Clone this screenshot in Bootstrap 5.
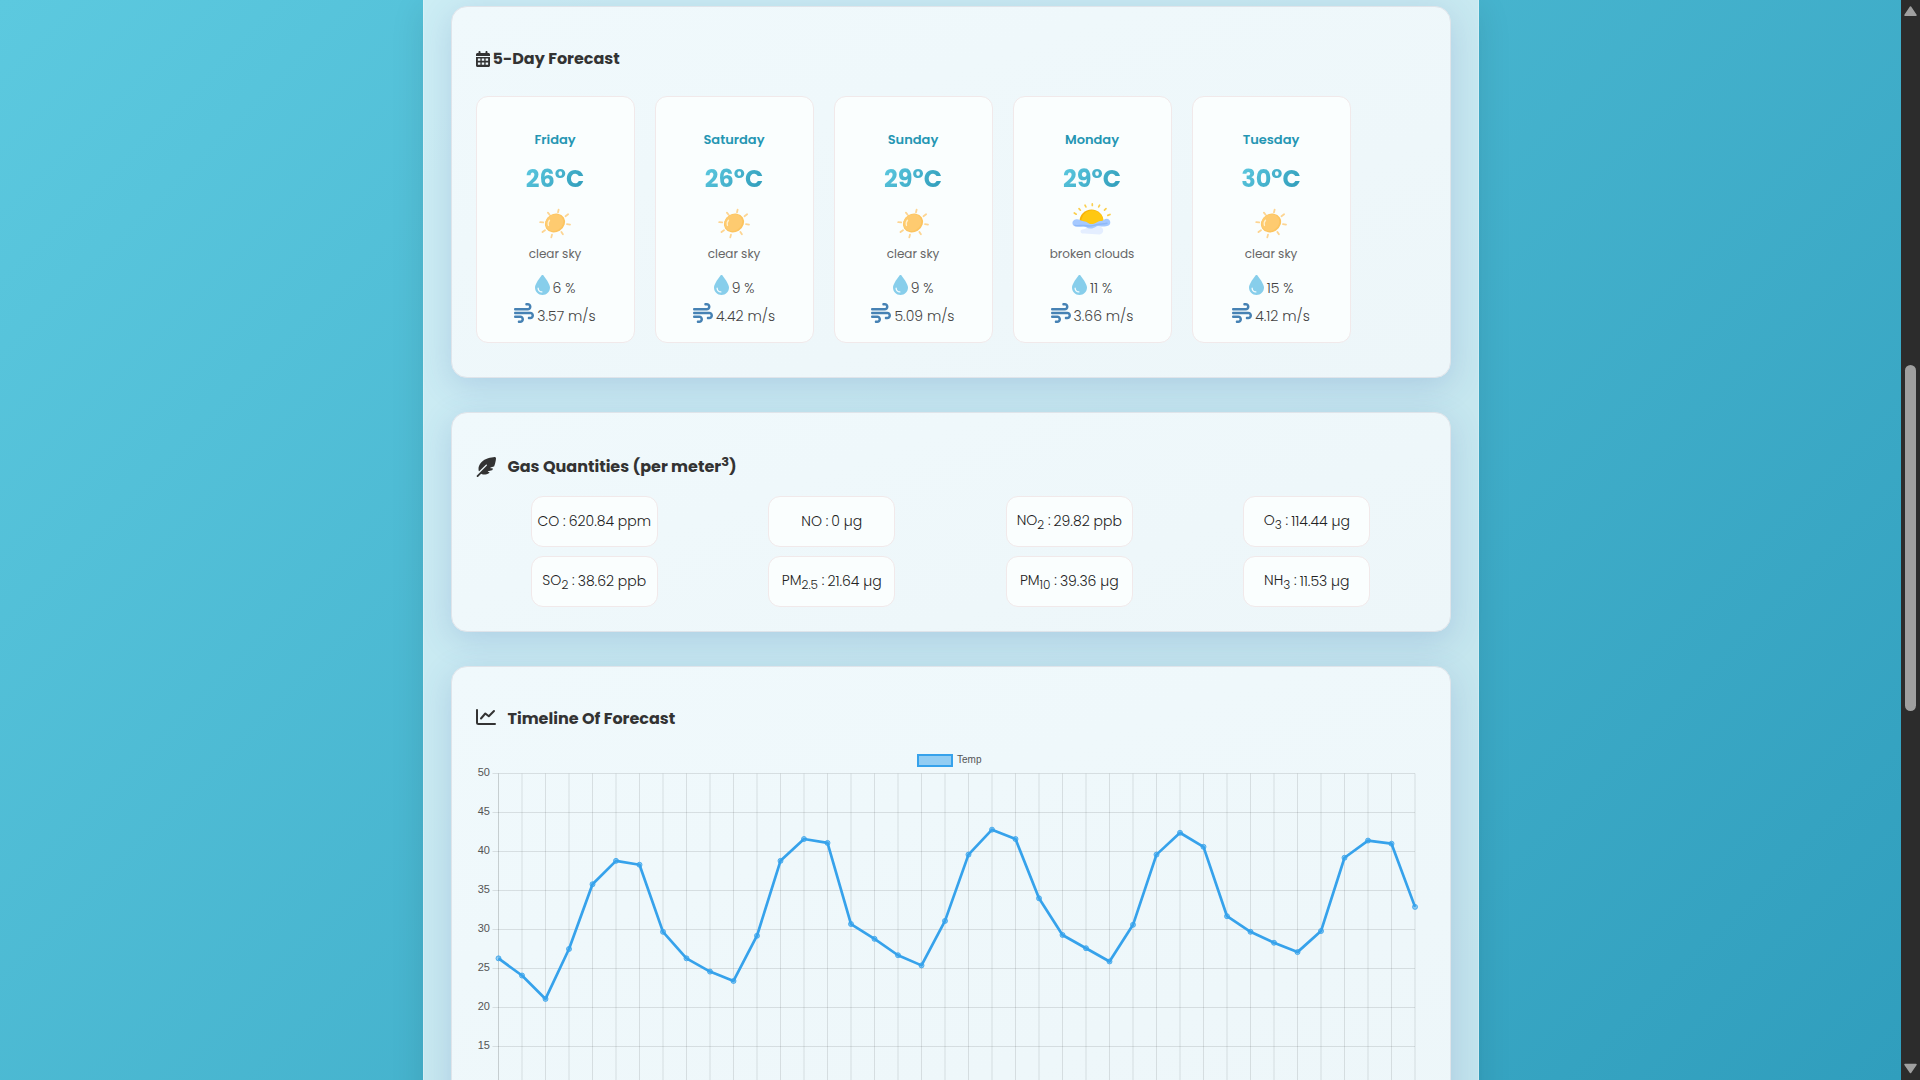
<!DOCTYPE html>
<html lang="en">
<head>
<meta charset="utf-8">
<meta name="viewport" content="width=device-width, initial-scale=1">
<title>Weather Forecast</title>
<link href="https://cdn.jsdelivr.net/npm/bootstrap@5.3.0/dist/css/bootstrap.min.css" rel="stylesheet">
<style>
  body { font-family: Poppins, Inter, "Open Sans", sans-serif; font-size: 14px; color: #333; }
  .sky { background: linear-gradient(135deg, #5cc9df 0%, #309ebd 100%); }
  .shell { max-width: 1056px; padding: 6px 27px; background: rgba(255,255,255,.7); border: 1px solid rgba(255,255,255,.25); border-top: 0; box-shadow: 0 8px 32px rgba(0,0,0,.1); }
  .stack { gap: 34px; }
  .panel { padding: 40px 24px 24px; border: 1px solid #dfe4ea; border-radius: 16px; background: #eff8fb linear-gradient(160deg, #f0f9fc, #edf6f9); box-shadow: 0 8px 32px rgba(60,90,170,.19); }
  .panel-days { padding-bottom: 34px; }
  .heading { font-size: 16px; font-weight: 700; line-height: 24px; }
  .heading-days { gap: 3px; margin-bottom: 25px; }
  .heading-gas { gap: 12px; line-height: 28px; margin-bottom: 15px; }
  .heading-gas sup { font-size: 13px; }
  .heading-chart { gap: 12px; margin-bottom: 19px; }
  .tile { background: #fafefe; border: 1px solid #f1e9ea; border-radius: 12px; }
  .days { gap: 20px; }
  .day { width: 159px; padding: 31px 8px 12px; }
  .day-name { font-size: 13px; line-height: 24px; font-weight: 600; color: #2596b3; }
  .day-temp { font-size: 24px; line-height: 36px; font-weight: 700; margin-top: 9px; background: linear-gradient(135deg, #5fcbe2, #2b98b6); -webkit-background-clip: text; background-clip: text; color: transparent; }
  .day-icon { margin-top: 6px; }
  .day-text { font-size: 12px; line-height: 20px; margin: 1px 0 10px; color: #666; }
  .reading { line-height: 28px; gap: 3px; color: #444; font-weight: 300; }
  .reading svg { margin-bottom: 7px; }
  .drop { color: #87ceeb; }
  .wind { color: #4682b4; }
  .gas-rows { row-gap: 9px; }
  .gas { width: 127px; height: 51px; gap: 3px; color: #222; font-weight: 300; }
  .gas sub { position: static; font-size: 12px; line-height: inherit; vertical-align: sub; }
  .axis-text { font-family: "Liberation Sans", Arial, sans-serif; font-size: 11px; fill: #555; }
  .legend-text { font-size: 10px; }
  .rail { width: 19px; background: #2c2c2c; padding: 6px 0; }
  .thumb { width: 11px; height: 346px; margin-top: 348px; border-radius: 6px; background: #9f9f9f; }
</style>
<script src="https://cdn.jsdelivr.net/npm/bootstrap@5.3.0/dist/js/bootstrap.bundle.min.js"></script>
</head>
<body>
<svg class="d-none" xmlns="http://www.w3.org/2000/svg">
  <defs>
    <symbol id="i-drop" viewBox="0 0 384 512"><path fill="currentColor" d="M192 512C86 512 0 426 0 320C0 228.8 130.2 57.7 166.6 11.7C172.6 4.2 181.5 0 191.1 0l1.8 0c9.6 0 18.5 4.2 24.5 11.7C253.8 57.7 384 228.8 384 320c0 106-86 192-192 192zM96 336c0-8.800-7.200-16-16-16s-16 7.200-16 16c0 61.900 50.100 112 112 112c8.800 0 16-7.200 16-16s-7.200-16-16-16c-44.200 0-80-35.800-80-80z"/></symbol>
    <symbol id="i-wind" viewBox="0 0 512 512"><path fill="currentColor" d="M288 32c0 17.700 14.300 32 32 32l32 0c17.700 0 32 14.300 32 32s-14.300 32-32 32L32 128c-17.700 0-32 14.300-32 32s14.300 32 32 32l320 0c53 0 96-43 96-96s-43-96-96-96L320 0c-17.700 0-32 14.300-32 32zm64 352c0 17.700 14.300 32 32 32l32 0c53 0 96-43 96-96s-43-96-96-96L32 224c-17.700 0-32 14.300-32 32s14.300 32 32 32l384 0c17.700 0 32 14.300 32 32s-14.300 32-32 32l-32 0c-17.700 0-32 14.300-32 32zM128 512l32 0c53 0 96-43 96-96s-43-96-96-96L32 320c-17.700 0-32 14.300-32 32s14.300 32 32 32l128 0c17.700 0 32 14.300 32 32s-14.300 32-32 32l-32 0c-17.700 0-32 14.300-32 32s14.300 32 32 32z"/></symbol>
    <symbol id="i-sun" viewBox="0 0 40 40">
      <g stroke="#fdd592" stroke-width="1.800" stroke-linecap="round">
        <path d="M23 9.300l.6-2.600M30.500 13.200l2.600-1.900M32 21.200l3 .4M26.400 29l1.500 2.200M17 31.600l-.7 2.800M10 27.300l-2.500 1.800M8.200 19.400l-3-.2M14.600 11.700l-1.700-2.100"/>
      </g>
      <ellipse cx="20" cy="20" rx="10.500" ry="9" transform="rotate(-32 20 20)" fill="#fcc45f"/>
      <ellipse cx="19.300" cy="19.600" rx="9.300" ry="8" transform="rotate(-32 19.300 19.600)" fill="#fecb70"/>
      <path d="M13.500 22.500q-1-3 1-5.300" fill="none" stroke="#fff0cc" stroke-width="1.300" stroke-linecap="round"/>
    </symbol>
    <symbol id="i-cloud" viewBox="1 2 40 40">
      <g stroke="#fbcf4f" stroke-width="1.700" stroke-linecap="round">
        <path d="M21.300 2.900v1.500M14 4.200l.9 1.700M28.600 4.200l-.9 1.700M8 7.600l1.400 1.600M35 7.600l-1.500 1.500M3.300 12l1.900 1.200M39 13.500l-2.200.9"/>
      </g>
      <circle cx="20.500" cy="20.500" r="12" fill="#f7b209"/>
      <path d="M10.500 22a11 11 0 0 1 21.500-4.500c1 5-3 8.500-8 8.500z" fill="#ffc812"/>
      <path d="M8 25h25v8H8z" fill="#fafefe"/>
      <path d="M13 32.500c-4.500.3-4.500-4.500-.5-4.300 2-.2 3-1 4-2.200h13c4 1 3.500 7-1 7.500z" fill="#e4eeff"/>
      <path d="M4.500 25.500c-4-.5-4.500-6.500.8-7.200 3-.4 4.500 1.700 7.200 1.900 4.500.3 5 3.500 9 2.700 4-.8 5-3 9-3 2-.2 3-2.100 5-2.100 4.500.2 5 5.700 1.500 7-3 1.200-6 .4-9 .4-4 0-5 2.600-9 2.300-3-.2-3.500-1.800-6-1.800-3 .1-5.500.3-8.500-.2z" fill="#a5c9ff"/>
      <path d="M4 24.300c3 1 7-.5 10 .2 3 .7 5 1 9-.2 5-1.500 8-1 13-2" fill="none" stroke="#8fb9f7" stroke-width="1.400" stroke-linecap="round"/>
    </symbol>
  </defs>
</svg>

<div class="d-flex vh-100 overflow-hidden">
  <main class="sky flex-grow-1 overflow-hidden">
    <div class="shell mx-auto min-vh-100">
      <div class="stack d-flex flex-column">

        <section class="panel panel-days">
          <h2 class="heading heading-days d-flex align-items-center">
            <svg width="14" height="16" viewBox="0 0 448 512" aria-hidden="true"><path fill="currentColor" fill-rule="evenodd" d="M112 0c18 0 32 14 32 32v32h160V32c0-18 14-32 32-32s32 14 32 32v32h32c26 0 48 22 48 48v48H0v-48c0-26 22-48 48-48h32V32c0-18 14-32 32-32zM0 192h448v272c0 26-22 48-48 48H48c-26 0-48-22-48-48zM60 236v76h80v-76zM184 236v76h80v-76zM308 236v76h80v-76zM60 366v76h80v-76zM184 366v76h80v-76zM308 366v76h80v-76z"/></svg>
            <span>5-Day Forecast</span>
          </h2>
          <div class="days d-flex">
            <article class="tile day d-flex flex-column align-items-center">
              <div class="day-name">Friday</div>
              <div class="day-temp">26°C</div>
              <svg class="day-icon" width="40" height="40"><use href="#i-sun"/></svg>
              <div class="day-text">clear sky</div>
              <div class="reading d-flex align-items-center"><svg class="drop" width="15" height="20"><use href="#i-drop"/></svg><span>6 %</span></div>
              <div class="reading d-flex align-items-center"><svg class="wind" width="20" height="20"><use href="#i-wind"/></svg><span>3.57 m/s</span></div>
            </article>
            <article class="tile day d-flex flex-column align-items-center">
              <div class="day-name">Saturday</div>
              <div class="day-temp">26°C</div>
              <svg class="day-icon" width="40" height="40"><use href="#i-sun"/></svg>
              <div class="day-text">clear sky</div>
              <div class="reading d-flex align-items-center"><svg class="drop" width="15" height="20"><use href="#i-drop"/></svg><span>9 %</span></div>
              <div class="reading d-flex align-items-center"><svg class="wind" width="20" height="20"><use href="#i-wind"/></svg><span>4.42 m/s</span></div>
            </article>
            <article class="tile day d-flex flex-column align-items-center">
              <div class="day-name">Sunday</div>
              <div class="day-temp">29°C</div>
              <svg class="day-icon" width="40" height="40"><use href="#i-sun"/></svg>
              <div class="day-text">clear sky</div>
              <div class="reading d-flex align-items-center"><svg class="drop" width="15" height="20"><use href="#i-drop"/></svg><span>9 %</span></div>
              <div class="reading d-flex align-items-center"><svg class="wind" width="20" height="20"><use href="#i-wind"/></svg><span>5.09 m/s</span></div>
            </article>
            <article class="tile day d-flex flex-column align-items-center">
              <div class="day-name">Monday</div>
              <div class="day-temp">29°C</div>
              <svg class="day-icon" width="40" height="40"><use href="#i-cloud"/></svg>
              <div class="day-text">broken clouds</div>
              <div class="reading d-flex align-items-center"><svg class="drop" width="15" height="20"><use href="#i-drop"/></svg><span>11 %</span></div>
              <div class="reading d-flex align-items-center"><svg class="wind" width="20" height="20"><use href="#i-wind"/></svg><span>3.66 m/s</span></div>
            </article>
            <article class="tile day d-flex flex-column align-items-center">
              <div class="day-name">Tuesday</div>
              <div class="day-temp">30°C</div>
              <svg class="day-icon" width="40" height="40"><use href="#i-sun"/></svg>
              <div class="day-text">clear sky</div>
              <div class="reading d-flex align-items-center"><svg class="drop" width="15" height="20"><use href="#i-drop"/></svg><span>15 %</span></div>
              <div class="reading d-flex align-items-center"><svg class="wind" width="20" height="20"><use href="#i-wind"/></svg><span>4.12 m/s</span></div>
            </article>
          </div>
        </section>

        <section class="panel">
          <h2 class="heading heading-gas d-flex align-items-center">
            <svg width="20" height="20" viewBox="0 0 512 512" aria-hidden="true"><path fill="currentColor" d="M278.500 215.600L23 471c-9.400 9.400-9.400 24.600 0 33.900s24.600 9.400 33.900 0l74.800-74.800c7.400 4.600 15.300 8.200 23.800 10.500C200.300 452.800 270 454.500 338 409.400c12.200-8.100 5.800-25.400-8.800-25.400l-16.100 0c-5.100 0-9.200-4.100-9.200-9.200c0-4.100 2.700-7.600 6.500-8.800l97.700-29.300c3.400-1 6.400-3.100 8.400-6.100c4.400-6.400 8.600-12.900 12.600-19.600c6.200-10.300-1.500-23-13.500-23l-38.600 0c-5.100 0-9.200-4.100-9.200-9.200c0-4.100 2.700-7.600 6.500-8.800l80.900-24.300c4.600-1.400 8.400-4.800 10.200-9.300C494.500 163 507.800 86.100 511.900 36.800c.8-9.900-3-19.600-10-26.600s-16.700-10.800-26.600-10C391.500 7 228.500 40.500 137.400 131.600C57.300 211.700 56.700 302.300 71.300 356.400c2.100 7.900 12 9.600 17.800 3.800L253.600 195.800c6.200-6.200 16.400-6.200 22.600 0c5.400 5.400 6.100 13.600 2.200 19.800z"/></svg>
            <span>Gas Quantities (per meter<sup>3</sup>)</span>
          </h2>
          <div class="gas-rows row gx-0">
            <div class="col-3 d-flex justify-content-center"><div class="tile gas d-flex align-items-center justify-content-center"><span>CO :</span><span>620.84 ppm</span></div></div>
            <div class="col-3 d-flex justify-content-center"><div class="tile gas d-flex align-items-center justify-content-center"><span>NO :</span><span>0 µg</span></div></div>
            <div class="col-3 d-flex justify-content-center"><div class="tile gas d-flex align-items-center justify-content-center"><span>NO<sub>2</sub> :</span><span>29.82 ppb</span></div></div>
            <div class="col-3 d-flex justify-content-center"><div class="tile gas d-flex align-items-center justify-content-center"><span>O<sub>3</sub> :</span><span>114.44 µg</span></div></div>
            <div class="col-3 d-flex justify-content-center"><div class="tile gas d-flex align-items-center justify-content-center"><span>SO<sub>2</sub> :</span><span>38.62 ppb</span></div></div>
            <div class="col-3 d-flex justify-content-center"><div class="tile gas d-flex align-items-center justify-content-center"><span>PM<sub>2.5</sub> :</span><span>21.64 µg</span></div></div>
            <div class="col-3 d-flex justify-content-center"><div class="tile gas d-flex align-items-center justify-content-center"><span>PM<sub>10</sub> :</span><span>39.36 µg</span></div></div>
            <div class="col-3 d-flex justify-content-center"><div class="tile gas d-flex align-items-center justify-content-center"><span>NH<sub>3</sub> :</span><span>11.53 µg</span></div></div>
          </div>
        </section>

        <section class="panel">
          <h2 class="heading heading-chart d-flex align-items-center">
            <svg width="20" height="20" viewBox="0 1 20 20" fill="none" stroke="currentColor" stroke-width="2" stroke-linecap="round" stroke-linejoin="round" aria-hidden="true"><path d="M1 2v12.500q0 1.500 1.500 1.500H19"/><path d="M5 10.500l4.300-5 3.500 2.800L18 3"/></svg>
            <span>Timeline Of Forecast</span>
          </h2>
          <svg id="timeline" class="d-block w-100" viewBox="0 0 950 440" role="img" aria-label="Temperature timeline"></svg>
        </section>

      </div>
    </div>
  </main>

  <aside class="rail flex-shrink-0 d-flex flex-column align-items-center" aria-hidden="true">
    <svg width="13" height="11" viewBox="0 0 13 11"><path d="M6.500 1L12 9.200H1z" fill="#a0a0a0" stroke="#a0a0a0" stroke-width="1.500" stroke-linejoin="round"/></svg>
    <div class="thumb"></div>
    <svg class="mt-auto" width="13" height="11" viewBox="0 0 13 11"><path d="M6.500 9.500L12 1.500H1z" fill="#a0a0a0" stroke="#a0a0a0" stroke-width="1.500" stroke-linejoin="round"/></svg>
  </aside>
</div>

<script>
  // Temperature at three-hour steps over five days
  const temps = [26.3, 24.1, 21.1, 27.5, 35.8, 38.8, 38.3, 29.7, 26.3, 24.6, 23.4, 29.2, 38.8, 41.6, 41.1, 30.7, 28.8, 26.7, 25.4, 31.1,
    39.6, 42.8, 41.6, 34, 29.3, 27.6, 25.9, 30.6, 39.6, 42.4, 40.6, 31.7, 29.7, 28.3, 27.1, 29.8, 39.2, 41.4, 41, 32.9];
  const left = 22.5, right = 939, top50 = 23.5, perDegree = 7.8, bottom = 440;
  const x = i => left + i * (right - left) / (temps.length - 1);
  const y = t => top50 + (50 - t) * perDegree;
  let out = '';
  temps.forEach((t, i) => {
    out += `<path d="M${x(i)} ${top50}V${bottom}" stroke="#000" stroke-opacity="${i ? 0.1 : 0.17}"/>`;
  });
  for (let v = 50; v >= 15; v -= 5) {
    out += `<path d="M16.500 ${y(v)}H${right}" stroke="#000" stroke-opacity=".1"/>`;
    out += `<text class="axis-text" x="14" y="${y(v) + 2.5}" text-anchor="end">${v}</text>`;
  }
  out += '<rect x="442" y="5" width="34" height="11" fill="#36a2eb" fill-opacity=".5" stroke="#36a2eb" stroke-width="2"/>';
  out += '<text class="axis-text legend-text" x="481" y="13">Temp</text>';
  out += `<polyline points="${temps.map((t, i) => x(i) + ',' + y(t)).join(' ')}" fill="none" stroke="#36a2eb" stroke-width="2.700" stroke-linejoin="round"/>`;
  temps.forEach((t, i) => {
    out += `<circle cx="${x(i)}" cy="${y(t)}" r="2.500" fill="#36a2eb" fill-opacity=".5" stroke="#36a2eb" stroke-opacity=".8"/>`;
  });
  document.getElementById('timeline').innerHTML = out;
</script>
</body>
</html>
